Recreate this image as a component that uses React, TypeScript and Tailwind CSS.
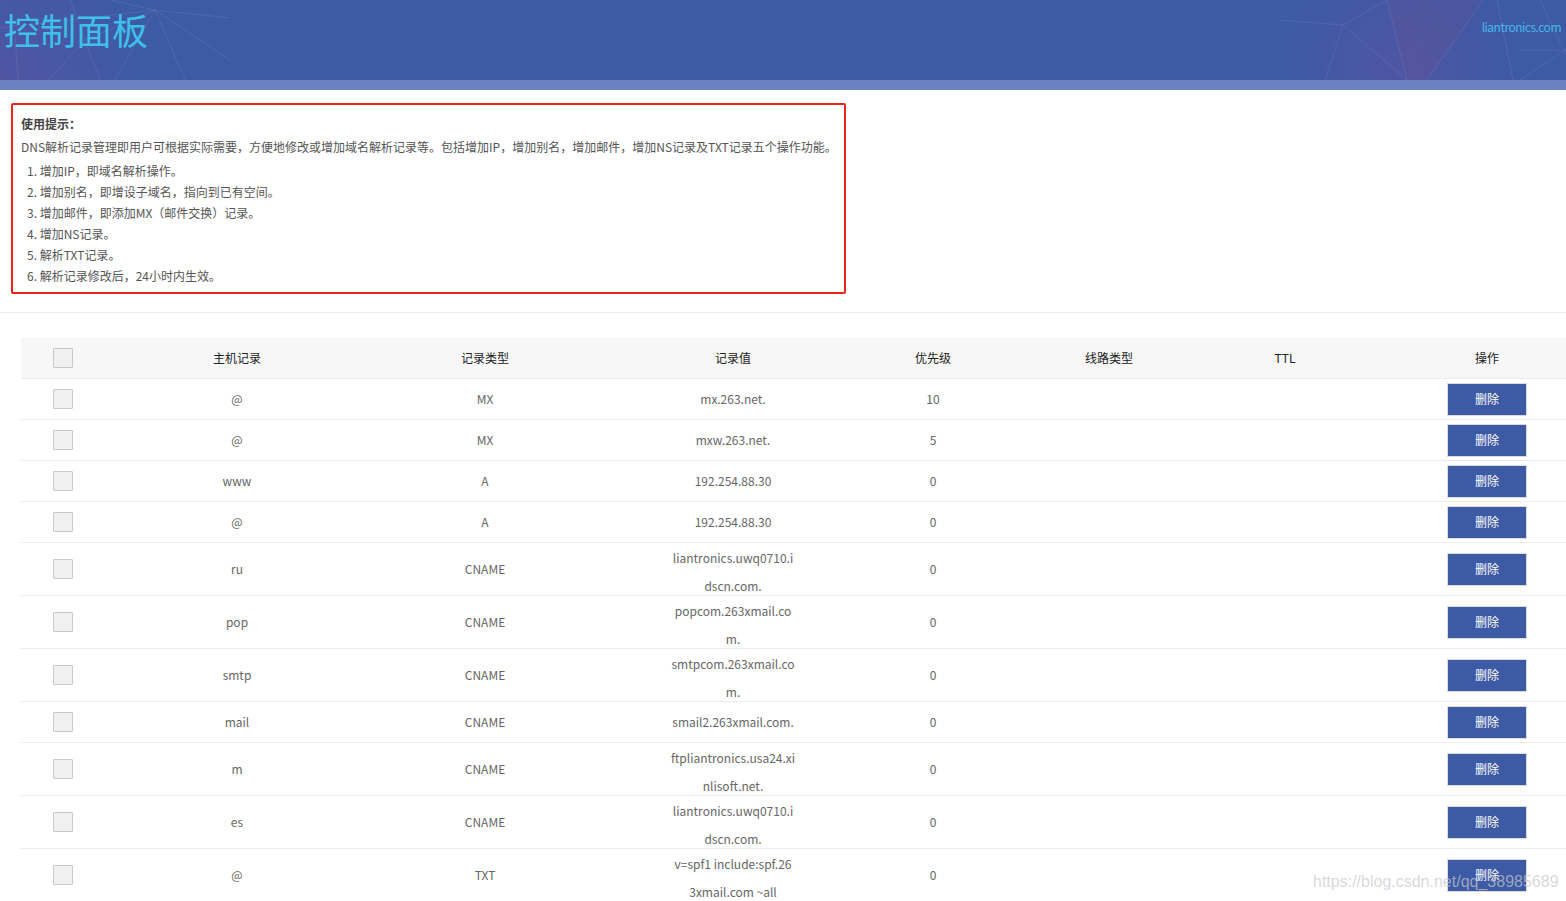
import React from "react";

type Row = {
  host: string;
  type: string;
  value: string[];
  prio: string;
};

const rows: Row[] = [
  { host: "@", type: "MX", value: ["mx.263.net."], prio: "10" },
  { host: "@", type: "MX", value: ["mxw.263.net."], prio: "5" },
  { host: "www", type: "A", value: ["192.254.88.30"], prio: "0" },
  { host: "@", type: "A", value: ["192.254.88.30"], prio: "0" },
  { host: "ru", type: "CNAME", value: ["liantronics.uwq0710.i", "dscn.com."], prio: "0" },
  { host: "pop", type: "CNAME", value: ["popcom.263xmail.co", "m."], prio: "0" },
  { host: "smtp", type: "CNAME", value: ["smtpcom.263xmail.co", "m."], prio: "0" },
  { host: "mail", type: "CNAME", value: ["smail2.263xmail.com."], prio: "0" },
  { host: "m", type: "CNAME", value: ["ftpliantronics.usa24.xi", "nlisoft.net."], prio: "0" },
  { host: "es", type: "CNAME", value: ["liantronics.uwq0710.i", "dscn.com."], prio: "0" },
  { host: "@", type: "TXT", value: ["v=spf1 include:spf.26", "3xmail.com ~all"], prio: "0" },
];

const tips = [
  "1. 增加IP，即域名解析操作。",
  "2. 增加别名，即增设子域名，指向到已有空间。",
  "3. 增加邮件，即添加MX（邮件交换）记录。",
  "4. 增加NS记录。",
  "5. 解析TXT记录。",
  "6. 解析记录修改后，24小时内生效。",
];

const gridCols = "grid grid-cols-[84px_264px_232px_264px_136px_216px_136px_268px]";

function Checkbox() {
  return <div className="w-[20px] h-[20px] border border-[#c9c9c9] bg-[#f0f0f0] rounded-[1px]" />;
}

function HeaderBg() {
  return (
    <svg className="absolute inset-0 w-full h-full" viewBox="0 0 1566 80" preserveAspectRatio="none">
      <defs>
        <radialGradient id="pl" cx="0" cy="80" r="140" gradientUnits="userSpaceOnUse">
          <stop offset="0" stopColor="#6a4fa0" stopOpacity="0.45" />
          <stop offset="1" stopColor="#6a4fa0" stopOpacity="0" />
        </radialGradient>
        <radialGradient id="pr" cx="1400" cy="70" r="120" gradientUnits="userSpaceOnUse">
          <stop offset="0" stopColor="#6a4fa0" stopOpacity="0.4" />
          <stop offset="1" stopColor="#6a4fa0" stopOpacity="0" />
        </radialGradient>
      </defs>
      <rect x="0" y="0" width="400" height="80" fill="url(#pl)" />
      <rect x="1200" y="0" width="366" height="80" fill="url(#pr)" />
      <polygon points="1387,0 1483,0 1427,80 1407,80" fill="#7a4f90" fillOpacity="0.18" />
      <g stroke="#ffffff" strokeOpacity="0.08" strokeWidth="1" fill="none">
        <path d="M0 28 L155 10 L230 18" />
        <path d="M155 10 L115 80" />
        <path d="M155 10 L185 80" />
        <path d="M70 0 L100 80" />
        <path d="M18 80 L15 35" />
        <path d="M48 80 L85 40 L155 10" />
        <path d="M155 10 L230 60" />
        <path d="M110 0 L155 10" />
        <path d="M1343 25 L1325 80" />
        <path d="M1343 25 L1407 80" />
        <path d="M1343 25 L1387 0" />
        <path d="M1343 25 L1280 20" />
        <path d="M1387 0 L1407 80" />
        <path d="M1483 0 L1427 80" />
        <path d="M1497 0 L1513 80" />
        <path d="M1566 50 L1520 80" />
        <path d="M1540 0 L1566 55" />
        <path d="M1520 50 L1566 50" />
      </g>
    </svg>
  );
}

export default function App() {
  return (
    <div
      className="relative w-full min-h-screen bg-white overflow-hidden"
      style={{ fontFamily: '"Noto Sans CJK SC", "Noto Sans", sans-serif' }}
    >
      {/* Header */}
      <header className="relative h-[80px] bg-[#3d5aa5] overflow-hidden">
        <HeaderBg />
        <div className="relative flex items-start justify-between h-full">
          <h1 className="pl-[4px] pt-[10px] text-[36px] leading-[38px] font-normal text-[#3fc0ea]">
            控制面板
          </h1>
          <div className="pr-[5px] pt-[18px] text-[12px] leading-[18px] tracking-[-0.5px] text-[#45b9e9]">
            liantronics.com
          </div>
        </div>
      </header>
      <div className="h-[10px] bg-[#6a81bf]" />

      {/* Tips box */}
      <div className="pl-[11px] pt-[13px]">
        <div className="w-[835px] h-[191px] border-2 border-[#e8221c] rounded-[2px] pt-[8px] px-[8px] text-[12px] text-[#555]">
          <div className="leading-[21px] font-bold text-[#444]">使用提示：</div>
          <div className="mt-[2px] leading-[21px] whitespace-nowrap">
            DNS解析记录管理即用户可根据实际需要，方便地修改或增加域名解析记录等。包括增加IP，增加别名，增加邮件，增加NS记录及TXT记录五个操作功能。
          </div>
          <ul className="mt-[3px] pl-[6px]">
            {tips.map((t) => (
              <li key={t} className="leading-[21px]">
                {t}
              </li>
            ))}
          </ul>
        </div>
      </div>

      {/* separator */}
      <div className="mt-[18px] h-px bg-[#ebebeb]" />

      {/* Table */}
      <div className="pl-[21px] pt-[25px]">
        <div className="w-[1600px] text-[12px]">
          <div className={`${gridCols} h-[41px] bg-[#f7f7f7] border-b border-[#ececec] text-[#222] items-center`}>
            <div className="flex justify-center"><Checkbox /></div>
            <div className="text-center">主机记录</div>
            <div className="text-center">记录类型</div>
            <div className="text-center">记录值</div>
            <div className="text-center">优先级</div>
            <div className="text-center">线路类型</div>
            <div className="text-center">TTL</div>
            <div className="text-center">操作</div>
          </div>
          {rows.map((r, i) => {
            const double = r.value.length > 1;
            return (
              <div
                key={i}
                className={`${gridCols} ${double ? "h-[53px]" : "h-[41px]"} border-b border-[#ececec] text-[#666] items-center`}
              >
                <div className="flex justify-center"><Checkbox /></div>
                <div className="text-center">{r.host}</div>
                <div className="text-center">{r.type}</div>
                {double ? (
                  <div className="self-start pt-[1px] text-center leading-[28px] h-[52px] whitespace-nowrap">
                    {r.value.map((v) => (
                      <div key={v}>{v}</div>
                    ))}
                  </div>
                ) : (
                  <div className="text-center whitespace-nowrap">{r.value[0]}</div>
                )}
                <div className="text-center">{r.prio}</div>
                <div className="text-center"></div>
                <div className="text-center"></div>
                <div className="flex justify-center">
                  <button className="w-[80px] h-[33px] bg-[#3d5aa5] border border-[#dcdcdc] text-white text-[12px] leading-none">
                    删除
                  </button>
                </div>
              </div>
            );
          })}
        </div>
      </div>

      {/* watermark */}
      <div
        className="absolute left-[1313px] top-[872px] text-[16px] leading-[20px] text-[rgba(200,200,200,0.7)] whitespace-nowrap pointer-events-none"
        style={{ fontFamily: '"Liberation Sans", Arial, sans-serif' }}
      >
        https://blog.csdn.net/qq_38985689
      </div>
    </div>
  );
}
